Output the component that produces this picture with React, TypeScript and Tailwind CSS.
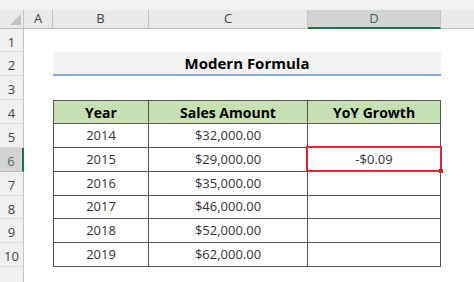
import type { ReactNode } from 'react'

const rows = [
  { year: '2014', amount: '$32,000.00', growth: '' },
  { year: '2015', amount: '$29,000.00', growth: '-$0.09' },
  { year: '2016', amount: '$35,000.00', growth: '' },
  { year: '2017', amount: '$46,000.00', growth: '' },
  { year: '2018', amount: '$52,000.00', growth: '' },
  { year: '2019', amount: '$62,000.00', growth: '' },
]

function RowHead({ label, active }: { label: string; active?: boolean }) {
  return (
    <div
      className={`w-[24px] shrink-0 flex items-center justify-center pt-[5px] text-[13px] border-b ${
        active
          ? 'bg-[#d4d4d4] text-[#3d7a58] border-r-2 border-r-[#217346] border-b-[#bdbdbd]'
          : 'bg-[#efefef] text-[#444] border-r border-r-[#c4c4c4] border-b-[#dadada]'
      }`}
    >
      {label}
    </div>
  )
}

function SheetRow({ h, label, active, children }: { h: string; label: string; active?: boolean; children?: ReactNode }) {
  return (
    <div className={`flex ${h}`}>
      <RowHead label={label} active={active} />
      <div className="w-[29px] shrink-0" />
      {children}
    </div>
  )
}

export default function App() {
  return (
    <div className="w-[474px] h-[282px] overflow-hidden bg-white font-['Open_Sans',sans-serif]">
      <div className="h-[10px] bg-[#f1f1f1]" />
      <div className="flex h-[19px] bg-[#e9e9e9] text-[13px] text-[#444] border-b border-[#bdbdbd]">
        <div className="w-[24px] shrink-0 relative border-r border-[#c4c4c4]">
          <svg className="absolute left-[10px] top-[4px]" width="11" height="11" viewBox="0 0 11 11">
            <polygon points="11,0 11,11 0,11" fill="#c2c2c2" />
          </svg>
        </div>
        <div className="w-[29px] shrink-0 flex items-center justify-center border-r border-[#c4c4c4]">A</div>
        <div className="w-[96px] shrink-0 flex items-center justify-center border-r border-[#c4c4c4]">B</div>
        <div className="w-[159px] shrink-0 flex items-center justify-center border-r border-[#c4c4c4]">C</div>
        <div className="w-[133px] shrink-0 flex items-center justify-center bg-[#d4d4d4] text-[#3d6b52] border-r border-[#c4c4c4] border-b-2 border-b-[#217346] mb-[-1px]">
          D
        </div>
        <div className="flex-1" />
      </div>

      <SheetRow h="h-[23px]" label="1" />
      <SheetRow h="h-[24px]" label="2">
        <div className="w-[388px] shrink-0 bg-[#f2f2f2] border-b-2 border-[#8ea9db] flex items-center justify-center text-[15px] font-bold text-black">
          Modern Formula
        </div>
      </SheetRow>
      <SheetRow h="h-[24px]" label="3" />
      <SheetRow h="h-[24px]" label="4">
        <div className="w-[96px] shrink-0 bg-[#c6e0b4] border border-[#555] flex items-center justify-center text-[14px] font-bold text-black">
          Year
        </div>
        <div className="w-[159px] shrink-0 bg-[#c6e0b4] border-y border-r border-[#555] flex items-center justify-center text-[14px] font-bold text-black">
          Sales Amount
        </div>
        <div className="w-[133px] shrink-0 bg-[#c6e0b4] border-y border-r border-[#555] flex items-center justify-center text-[14px] font-bold text-black">
          YoY Growth
        </div>
      </SheetRow>
      {rows.map((r, i) => (
        <SheetRow key={r.year} h={i === 3 ? 'h-[23px]' : 'h-[24px]'} label={String(i + 5)} active={i === 1}>
          <div className="w-[96px] shrink-0 border-x border-b border-[#555] flex items-center justify-center text-[13px] text-[#333]">
            {r.year}
          </div>
          <div className="w-[159px] shrink-0 border-r border-b border-[#555] flex items-center justify-center text-[13px] text-[#333]">
            {r.amount}
          </div>
          <div className="w-[133px] shrink-0 relative border-r border-b border-[#555] flex items-center justify-center text-[13px] text-[#333]">
            {r.growth}
            {i === 1 && (
              <div className="absolute -left-[2px] -top-[2px] -right-[2px] -bottom-[1px] border-2 border-[#e3262d] z-10">
                <div className="absolute -right-[3px] -bottom-[3px] w-[4px] h-[4px] bg-[#c0262b]" />
              </div>
            )}
          </div>
        </SheetRow>
      ))}
      <SheetRow h="h-[24px]" label="" />
    </div>
  )
}
